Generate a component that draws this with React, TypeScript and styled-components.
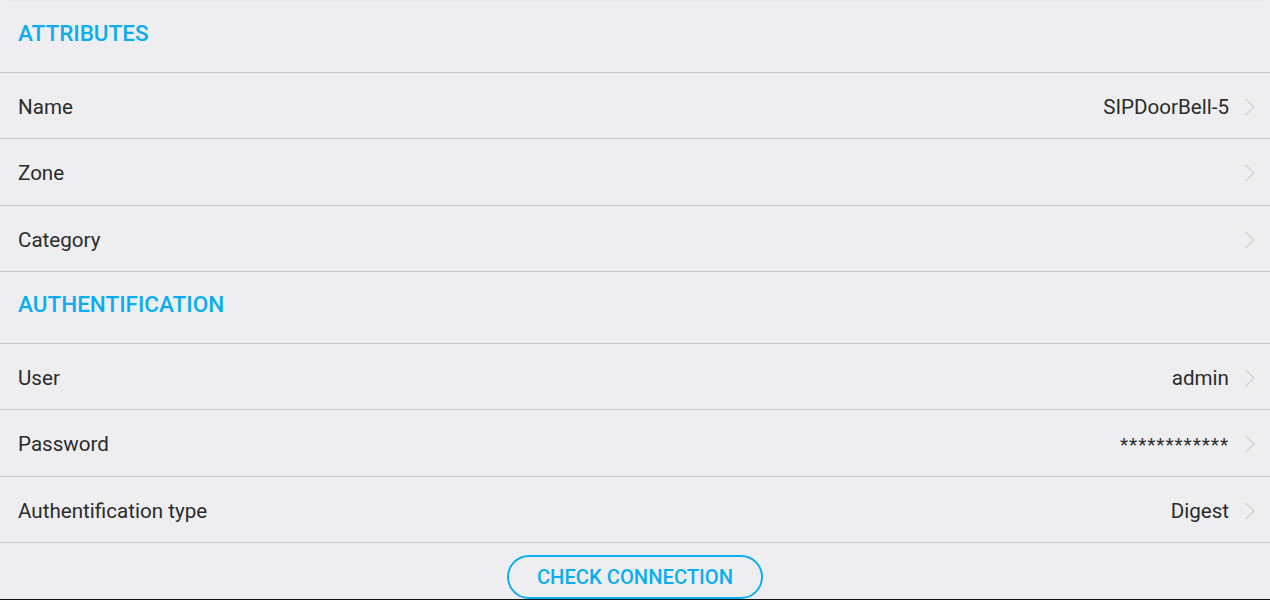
import styled, { createGlobalStyle } from 'styled-components';

type RowType = { id: number; label: string; value?: string };

const GlobalStyle = createGlobalStyle`
  body {
    margin: 0;
    background: #eeeef0;
    font-family: Roboto, "Liberation Sans", sans-serif;
  }
`;

const Page = styled.div`
  height: 600px;
  display: flex;
  flex-direction: column;
  overflow: hidden;
  background: #eeeef0;
  border-bottom: 1px solid #0c1616;
  box-sizing: border-box;
`;

const TopEdge = styled.div`
  height: 1px;
  margin: 0 6px 0 8px;
  background: #e6e6e8;
  flex-shrink: 0;
`;

const SectionHeader = styled.div`
  height: 71.8px;
  flex-shrink: 0;
  box-sizing: border-box;
  display: flex;
  align-items: center;
  padding: 0 18px 7px;
  border-bottom: 1px solid #c6c6c8;
  color: #0aaeef;
  font-size: 22.5px;
  font-weight: 500;
`;

const Row = styled.div`
  height: 66.4px;
  flex-shrink: 0;
  box-sizing: border-box;
  display: flex;
  align-items: center;
  padding: 3px 14px 0 18px;
  border-bottom: 1px solid #c6c6c8;
  color: #2b2b2d;
  font-size: 20.6px;
`;

const Label = styled.span`
  flex: 1;
`;

const Value = styled.span<{ $masked?: boolean }>`
  margin-right: 15px;
  font-size: ${(p) => (p.$masked ? '19px' : 'inherit')};
  letter-spacing: ${(p) => (p.$masked ? '0.9px' : '0')};
`;

const Chevron = styled.svg`
  width: 12px;
  height: 18px;
  flex-shrink: 0;
`;

const Footer = styled.div`
  flex: 1;
  display: flex;
  justify-content: center;
  padding-top: 12px;
`;

const PillButton = styled.button`
  width: 256px;
  height: 44px;
  border: 2px solid #0aaeef;
  border-radius: 22px;
  background: transparent;
  color: #0aaeef;
  font-family: Roboto, "Liberation Sans", sans-serif;
  font-size: 20.2px;
  font-weight: 500;
  padding: 0;
  cursor: pointer;
`;

const attributes: RowType[] = [
  { id: 0, label: 'Name', value: 'SIPDoorBell-5' },
  { id: 1, label: 'Zone' },
  { id: 2, label: 'Category' },
];

const auth: RowType[] = [
  { id: 0, label: 'User', value: 'admin' },
  { id: 1, label: 'Password', value: '************' },
  { id: 2, label: 'Authentification type', value: 'Digest' },
];

function SettingRow({ row }: { row: RowType }) {
  return (
    <Row>
      <Label>{row.label}</Label>
      {row.value ? <Value $masked={row.label === 'Password'}>{row.value}</Value> : null}
      <Chevron viewBox="0 0 12 18">
        <polyline points="1.5,1 10,9 1.5,17" fill="none" stroke="#d2d2d4" strokeWidth="1.4" />
      </Chevron>
    </Row>
  );
}

export default function App() {
  return (
    <Page>
      <GlobalStyle />
      <TopEdge />
      <SectionHeader>ATTRIBUTES</SectionHeader>
      {attributes.map((r) => (
        <SettingRow key={'a' + r.id} row={r} />
      ))}
      <SectionHeader>AUTHENTIFICATION</SectionHeader>
      {auth.map((r) => (
        <SettingRow key={'b' + r.id} row={r} />
      ))}
      <Footer>
        <PillButton>CHECK CONNECTION</PillButton>
      </Footer>
    </Page>
  );
}
